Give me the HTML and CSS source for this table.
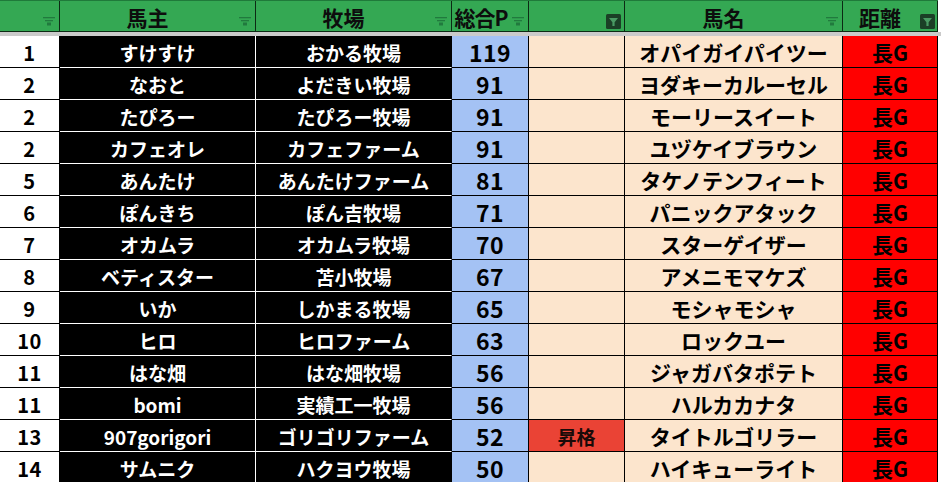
FILE: index.html
```html
<!DOCTYPE html>
<html lang="ja">
<head>
<meta charset="utf-8">
<title>ランキング</title>
<link rel="stylesheet" href="styles.css">
</head>
<body>
<div class="sheet">
  <div class="row head">
    <div class="h"><span class="t"></span><svg class="f" viewBox="0 0 12 9"><rect x="0" y="0" width="12" height="1.3"/><rect x="2" y="3" width="8" height="1.3"/><rect x="4" y="5.5" width="4" height="3"/></svg></div>
    <div class="h"><span class="t">馬主</span><svg class="f" viewBox="0 0 12 9"><rect x="0" y="0" width="12" height="1.3"/><rect x="2" y="3" width="8" height="1.3"/><rect x="4" y="5.5" width="4" height="3"/></svg></div>
    <div class="h"><span class="t">牧場</span><svg class="f" viewBox="0 0 12 9"><rect x="0" y="0" width="12" height="1.3"/><rect x="2" y="3" width="8" height="1.3"/><rect x="4" y="5.5" width="4" height="3"/></svg></div>
    <div class="h"><span class="t">総合P</span><svg class="f" viewBox="0 0 12 9"><rect x="0" y="0" width="12" height="1.3"/><rect x="2" y="3" width="8" height="1.3"/><rect x="4" y="5.5" width="4" height="3"/></svg></div>
    <div class="h"><span class="t"></span><svg class="fa" viewBox="0 0 15 15"><rect x="0" y="0" width="15" height="15" rx="1.5"/><path d="M3 4 H12 L8.6 8.2 V12 H6.4 V8.2 Z"/></svg></div>
    <div class="h"><span class="t">馬名</span><svg class="f" viewBox="0 0 12 9"><rect x="0" y="0" width="12" height="1.3"/><rect x="2" y="3" width="8" height="1.3"/><rect x="4" y="5.5" width="4" height="3"/></svg></div>
    <div class="h"><span class="t">距離</span><svg class="fa" viewBox="0 0 15 15"><rect x="0" y="0" width="15" height="15" rx="1.5"/><path d="M3 4 H12 L8.6 8.2 V12 H6.4 V8.2 Z"/></svg></div>
  </div>
  <div class="sep"></div>

  <div class="row"><div class="c rank">1</div><div class="c own">すけすけ</div><div class="c farm">おかる牧場</div><div class="c pts">119</div><div class="c note"></div><div class="c horse">オパイガイパイツー</div><div class="c dist">長G</div></div>
  <div class="row"><div class="c rank">2</div><div class="c own">なおと</div><div class="c farm">よだきい牧場</div><div class="c pts">91</div><div class="c note"></div><div class="c horse">ヨダキーカルーセル</div><div class="c dist">長G</div></div>
  <div class="row"><div class="c rank">2</div><div class="c own">たぴろー</div><div class="c farm">たぴろー牧場</div><div class="c pts">91</div><div class="c note"></div><div class="c horse">モーリースイート</div><div class="c dist">長G</div></div>
  <div class="row"><div class="c rank">2</div><div class="c own">カフェオレ</div><div class="c farm">カフェファーム</div><div class="c pts">91</div><div class="c note"></div><div class="c horse">ユヅケイブラウン</div><div class="c dist">長G</div></div>
  <div class="row"><div class="c rank">5</div><div class="c own">あんたけ</div><div class="c farm">あんたけファーム</div><div class="c pts">81</div><div class="c note"></div><div class="c horse">タケノテンフィート</div><div class="c dist">長G</div></div>
  <div class="row"><div class="c rank">6</div><div class="c own">ぽんきち</div><div class="c farm">ぽん吉牧場</div><div class="c pts">71</div><div class="c note"></div><div class="c horse">パニックアタック</div><div class="c dist">長G</div></div>
  <div class="row"><div class="c rank">7</div><div class="c own">オカムラ</div><div class="c farm">オカムラ牧場</div><div class="c pts">70</div><div class="c note"></div><div class="c horse">スターゲイザー</div><div class="c dist">長G</div></div>
  <div class="row"><div class="c rank">8</div><div class="c own">ベティスター</div><div class="c farm">苫小牧場</div><div class="c pts">67</div><div class="c note"></div><div class="c horse">アメニモマケズ</div><div class="c dist">長G</div></div>
  <div class="row"><div class="c rank">9</div><div class="c own">いか</div><div class="c farm">しかまる牧場</div><div class="c pts">65</div><div class="c note"></div><div class="c horse">モシャモシャ</div><div class="c dist">長G</div></div>
  <div class="row"><div class="c rank">10</div><div class="c own">ヒロ</div><div class="c farm">ヒロファーム</div><div class="c pts">63</div><div class="c note"></div><div class="c horse">ロックユー</div><div class="c dist">長G</div></div>
  <div class="row"><div class="c rank">11</div><div class="c own">はな畑</div><div class="c farm">はな畑牧場</div><div class="c pts">56</div><div class="c note"></div><div class="c horse">ジャガバタポテト</div><div class="c dist">長G</div></div>
  <div class="row"><div class="c rank">11</div><div class="c own">bomi</div><div class="c farm">実績工一牧場</div><div class="c pts">56</div><div class="c note"></div><div class="c horse">ハルカカナタ</div><div class="c dist">長G</div></div>
  <div class="row"><div class="c rank">13</div><div class="c own">907gorigori</div><div class="c farm">ゴリゴリファーム</div><div class="c pts">52</div><div class="c note up">昇格</div><div class="c horse">タイトルゴリラー</div><div class="c dist">長G</div></div>
  <div class="row"><div class="c rank">14</div><div class="c own">サムニク</div><div class="c farm">ハクヨウ牧場</div><div class="c pts">50</div><div class="c note"></div><div class="c horse">ハイキューライト</div><div class="c dist">長G</div></div>
</div>
</body>
</html>
```

FILE: styles.css
```css
html, body {
  margin: 0;
  padding: 0;
  background: #ffffff;
}

body {
  font-family: "Noto Sans CJK JP", "Noto Sans", sans-serif;
  font-weight: 700;
  color: #000;
  overflow: hidden;
}

.sheet {
  width: 941px;
}

.row {
  display: grid;
  grid-template-columns: 60px 196px 196px 77px 96px 218px 95px;
  height: 32px;
}

.head {
  height: 32px;
  background: #34a853;
  border-top: 1px solid #1f7a3a;
  box-sizing: border-box;
  width: 938px;
}

.h {
  position: relative;
  box-sizing: border-box;
  border-right: 1px solid #0c2a14;
  border-bottom: 1px solid #0c2a14;
  display: flex;
  align-items: center;
  justify-content: center;
  padding-right: 20px;
  padding-top: 2px;
  font-size: 21px;
  line-height: 1;
  color: #0d0d0d;
}

.h:nth-child(4) {
  padding-right: 18px;
  letter-spacing: -1px;
}

.f {
  position: absolute;
  right: 4px;
  bottom: 5px;
  width: 12px;
  height: 9px;
  fill: #217a3e;
}

.fa {
  position: absolute;
  right: 3px;
  bottom: 2px;
  width: 15px;
  height: 15px;
}

.fa rect {
  fill: #1b3f26;
}

.fa path {
  fill: #4a9a63;
}

.h:last-child .fa {
  right: 2px;
}

.sep {
  height: 4px;
  background: #cacaca;
  width: 941px;
}

.c {
  box-sizing: border-box;
  border-right: 1px solid #000;
  border-bottom: 1px solid #000;
  display: flex;
  align-items: center;
  justify-content: center;
  padding-top: 2px;
  line-height: 1;
  white-space: nowrap;
}

.rank {
  background: #fff;
  font-size: 20px;
  letter-spacing: 0.5px;
}

.own {
  background: #000;
  color: #fff;
  border-right-color: #fff;
  border-bottom-color: #fff;
  font-size: 19px;
}

.farm {
  background: #000;
  color: #fff;
  border-bottom-color: #fff;
  font-size: 19px;
}

.pts {
  background: #a4c2f4;
  font-size: 23px;
  letter-spacing: 0.5px;
}

.note {
  background: #fce5cd;
  font-size: 19px;
}

.note.up {
  background: #ea4335;
  color: #1a0a08;
}

.horse {
  background: #fce5cd;
  font-size: 21px;
}

.dist {
  background: #ff0000;
  font-size: 21px;
}
```
